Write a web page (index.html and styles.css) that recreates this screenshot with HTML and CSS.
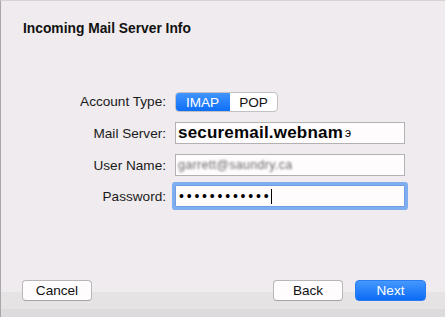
FILE: index.html
```html
<!DOCTYPE html>
<html lang="en">
<head>
    <meta charset="UTF-8" />
    <meta name="viewport" content="width=device-width, initial-scale=1" />
    <title>Incoming Mail Server Info</title>
    <link rel="stylesheet" href="styles.css">
</head>
<body>
    <div class="sheet">
        <h1 class="title">Incoming Mail Server Info</h1>

        <form class="server-form">
            <label class="field-label">Account Type:</label>
            <div class="segmented">
                <span class="segment active">IMAP</span>
                <span class="segment">POP</span>
            </div>

            <label class="field-label">Mail Server:</label>
            <div class="text-box server-text">securemail.webnam <span class="stray">э</span></div>

            <label class="field-label">User Name:</label>
            <div class="text-box"><span class="blurred">garrett@saundry.ca</span></div>

            <label class="field-label">Password:</label>
            <div class="text-box focused"><span class="dots">••••••••••••</span><span class="caret"></span></div>
        </form>

        <div class="footer">
            <button type="button" class="btn">Cancel</button>
            <div class="footer-right">
                <button type="button" class="btn">Back</button>
                <button type="button" class="btn primary">Next</button>
            </div>
        </div>
    </div>
</body>
</html>
```

FILE: styles.css
```css
html, body {
    margin: 0;
    padding: 0;
}

body {
    font-family: "Liberation Sans", Arial, sans-serif;
    font-size: 13px;
    color: #111;
    background: #efebee;
}

.sheet {
    width: 444px;
    height: 316px;
    border-left: 1px solid #a9a7a9;
    border-top: 1px solid #d6d3d5;
    background: #efebee;
    display: flex;
    flex-direction: column;
}

.title {
    margin: 20px 0 0 22px;
    font-size: 13.8px;
    line-height: 16px;
    font-weight: bold;
    color: #111;
}

.server-form {
    display: grid;
    grid-template-columns: 165px 230px;
    column-gap: 9px;
    align-items: center;
    margin-top: 49px;
}

.field-label {
    text-align: right;
    color: #1a1a1a;
    font-size: 13.6px;
}

/* segmented control */
.segmented {
    display: flex;
    width: 103px;
    height: 20px;
    border: 1px solid #c2c0c2;
    border-radius: 4px;
    box-sizing: border-box;
    background: #fff;
    overflow: hidden;
}

.segment {
    display: flex;
    align-items: center;
    justify-content: center;
    flex: 1;
    font-size: 13.6px;
    color: #111;
}

.segment.active {
    flex: 0 0 55px;
    margin: -1px 0 -1px -1px;
    background: linear-gradient(#4397fd, #0b6cf7);
    color: #fff;
}

/* text fields */
.text-box {
    height: 22px;
    box-sizing: border-box;
    border: 1px solid #b3b1b3;
    background: #fffcfe;
    display: flex;
    align-items: center;
    padding-left: 2px;
    white-space: nowrap;
    overflow: hidden;
}

.server-form .segmented { margin: 6px 0 5px; }
.server-form .text-box { margin: 5px 0; }

.server-text {
    font-size: 17px;
    font-weight: bold;
    letter-spacing: 0.2px;
    color: #050505;
}

.stray {
    font-size: 12px;
    font-weight: normal;
    margin-left: 2px;
}

.blurred {
    font-size: 12.5px;
    letter-spacing: 0.3px;
    color: #6a6a6a;
    filter: blur(1.3px);
}

.text-box.focused {
    box-shadow: 0 0 0 3px #7eaef0;
    border-color: #6e9de6;
    border-radius: 1px;
    margin-top: 4px;
}

.dots {
    font-size: 14px;
    letter-spacing: 2.8px;
    color: #000;
    padding-left: 1px;
}

.caret {
    display: inline-block;
    width: 1px;
    height: 15px;
    background: #000;
}

/* footer */
.footer {
    margin-top: auto;
    height: 37px;
    display: flex;
    justify-content: space-between;
    align-items: flex-start;
    padding: 0 19px 0 21px;
    background: linear-gradient(#efebee 0, #efebee 12px, #e6e3e5 12px, #e6e3e5 29px, #dddbdd 29px);
}

.footer-right {
    display: flex;
    gap: 12px;
}

.btn {
    width: 70px;
    height: 21px;
    padding: 0;
    font-family: "Liberation Sans", Arial, sans-serif;
    font-size: 13.6px;
    color: #111;
    background: #fffcfe;
    border: 1px solid #b9b7b9;
    border-bottom-color: #a5a3a5;
    border-radius: 4px;
}

.btn.primary {
    width: 71px;
    color: #fff;
    background: linear-gradient(#4598fd, #0a6bf6);
    border-color: #2a7cf2;
}
```
